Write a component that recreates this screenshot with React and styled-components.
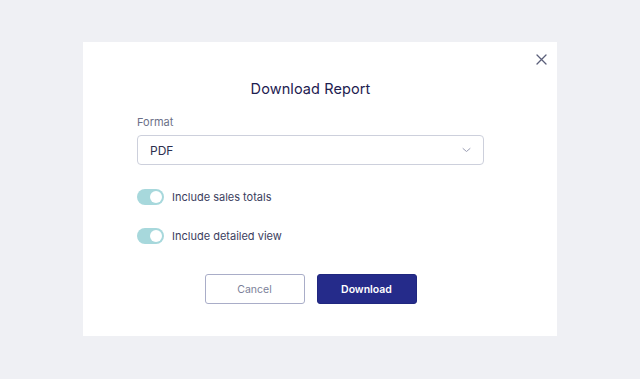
import React, { useState } from 'react'
import styled, { createGlobalStyle } from 'styled-components'

const GlobalStyle = createGlobalStyle`
  html, body {
    margin: 0;
    padding: 0;
    background: #eff0f4;
    font-family: "Inter", "Liberation Sans", sans-serif;
  }
`;

const Page = styled.div`
  width: 640px;
  height: 379px;
  padding-top: 42px;
  padding-left: 83px;
  box-sizing: border-box;
`;

const Modal = styled.div`
  position: relative;
  width: 474px;
  height: 294px;
  box-sizing: border-box;
  background: #ffffff;
  padding: 35px 73px 0 54px;
`;

const Close = styled.button`
  position: absolute;
  top: 11px;
  right: 10px;
  width: 12px;
  height: 12px;
  padding: 0;
  border: none;
  background: none;
  display: flex;
  align-items: center;
  justify-content: center;
  color: #5b5f7a;
`;

const Title = styled.h2`
  margin: 0;
  text-align: center;
  font-size: 14.5px;
  font-weight: 400;
  line-height: 24px;
  color: #1d2050;
  letter-spacing: 0.1px;
`;

const Label = styled.div`
  margin-top: 14px;
  font-size: 11px;
  line-height: 14px;
  color: #6c7088;
`;

const Select = styled.div`
  margin-top: 6px;
  height: 30px;
  box-sizing: border-box;
  border: 1px solid #cdd0dc;
  border-radius: 4px;
  display: flex;
  align-items: center;
  justify-content: space-between;
  padding: 0 12px 0 12px;
  font-size: 12px;
  color: #2c2f4e;
`;

const Options = styled.div`
  margin-top: 24px;
  display: flex;
  flex-direction: column;
  gap: 23px;
`;

const OptionRow = styled.label`
  display: flex;
  align-items: center;
  gap: 8px;
  font-size: 11px;
  color: #3b3e5e;
  line-height: 16px;
`;

const Track = styled.span`
  width: 27px;
  height: 16px;
  border-radius: 8px;
  background: ${(p) => (p.on ? '#a7d8dc' : '#d5d7e0')};
  display: flex;
  align-items: center;
  justify-content: ${(p) => (p.on ? 'flex-end' : 'flex-start')};
  padding: 0 2px;
  box-sizing: border-box;
`;

const Knob = styled.span`
  width: 12px;
  height: 12px;
  border-radius: 50%;
  background: #ffffff;
`;

const Actions = styled.div`
  margin-top: 30px;
  display: flex;
  justify-content: center;
  gap: 12px;
`;

const Button = styled.button`
  width: 100px;
  height: 30px;
  box-sizing: border-box;
  border-radius: 3px;
  font-family: inherit;
  font-size: 10.5px;
  cursor: pointer;
  border: 1px solid ${(p) => (p.primary ? '#20277f' : '#a9adc8')};
  background: ${(p) => (p.primary ? '#252b8a' : '#ffffff')};
  color: ${(p) => (p.primary ? '#ffffff' : '#7b7f99')};
  font-weight: ${(p) => (p.primary ? 600 : 400)};
`;

const Toggle = ({ label }) => {
  const [on, setOn] = useState(true);
  return (
    <OptionRow onClick={() => setOn(!on)}>
      <Track on={on ? 1 : 0}><Knob /></Track>
      {label}
    </OptionRow>
  );
};

export default function App() {
  return (
    <Page>
      <GlobalStyle />
      <Modal>
        <Close aria-label="Close">
          <svg width="11" height="11" viewBox="0 0 11 11" fill="none" stroke="currentColor" strokeWidth="1.3" strokeLinecap="round">
            <path d="M1 1l9 9M10 1l-9 9" />
          </svg>
        </Close>
        <Title>Download Report</Title>
        <Label>Format</Label>
        <Select>
          <span>PDF</span>
          <svg width="9" height="6" viewBox="0 0 9 6" fill="none" stroke="#9a9db3" strokeWidth="1" strokeLinecap="round" strokeLinejoin="round">
            <path d="M1 1.5l3.5 3 3.5-3" />
          </svg>
        </Select>
        <Options>
          <Toggle label="Include sales totals" />
          <Toggle label="Include detailed view" />
        </Options>
        <Actions>
          <Button>Cancel</Button>
          <Button primary>Download</Button>
        </Actions>
      </Modal>
    </Page>
  );
}
